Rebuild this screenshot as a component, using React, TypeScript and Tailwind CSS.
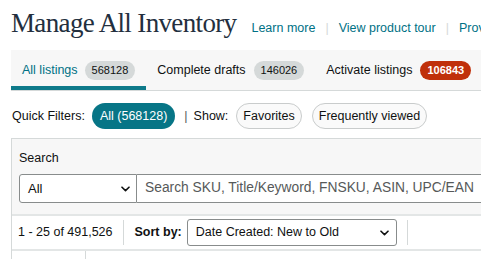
import React from "react";

function Chevron() {
  return (
    <svg width="9" height="6" viewBox="0 0 9 6" className="shrink-0">
      <path d="M1 1.2 L4.5 4.6 L8 1.2" fill="none" stroke="#0f1111" strokeWidth="1.6" strokeLinecap="round" strokeLinejoin="round" />
    </svg>
  );
}

export default function App() {
  return (
    <div className="w-[481px] h-[259px] overflow-hidden bg-white text-[#0f1111] font-['Liberation_Sans',Arial,sans-serif] text-[12.5px]">
      <div className="w-[680px]">
        {/* Header */}
        <div className="flex items-baseline pl-[11px] pt-[9px] h-[50px]">
          <h1 className="font-['Liberation_Serif','Times_New_Roman',serif] text-[27px] leading-[28px] text-[#232f3e] tracking-[-0.65px]">
            Manage All Inventory
          </h1>
          <a className="ml-[15px] text-[#007185]">Learn more</a>
          <span className="mx-[10px] text-[#d5d9d9]">|</span>
          <a className="text-[#007185]">View product tour</a>
          <span className="mx-[10px] text-[#d5d9d9]">|</span>
          <a className="text-[#007185]">Provide feedback</a>
        </div>

        {/* Tabs */}
        <div className="ml-[11px] h-[41px] flex bg-[#f7f7f7] border-b border-[#d5d9d9]">
          <div className="flex items-center gap-[7px] px-[11px] pt-[4px] border-b-4 border-[#0e7a8a]">
            <span className="text-[#007185]">All listings</span>
            <span className="h-[19px] px-[7px] rounded-full bg-[#d5d9d9] text-[11px] leading-[19px] text-[#0f1111]">568128</span>
          </div>
          <div className="flex items-center gap-[8px] px-[11px] pt-[4px] border-b-4 border-transparent">
            <span>Complete drafts</span>
            <span className="h-[19px] px-[7px] rounded-full bg-[#d5d9d9] text-[11px] leading-[19px] text-[#0f1111]">146026</span>
          </div>
          <div className="flex items-center gap-[8px] px-[11px] pt-[4px] border-b-4 border-transparent">
            <span>Activate listings</span>
            <span className="h-[19px] px-[7px] rounded-full bg-[#c0300a] text-[11px] leading-[19px] font-bold text-white">106843</span>
          </div>
        </div>

        {/* Quick filters */}
        <div className="flex items-center h-[26px] mt-[12px] pl-[12px]">
          <span>Quick Filters:</span>
          <button className="ml-[7px] h-[26px] px-[8px] rounded-full bg-[#077586] text-white font-medium">All (568128)</button>
          <span className="ml-[9px] text-[#565959]">|</span>
          <span className="ml-[6px]">Show:</span>
          <button className="ml-[8px] h-[26px] px-[6px] rounded-full border border-[#c9cccc] bg-[#fafafa]">Favorites</button>
          <button className="ml-[10px] h-[26px] px-[6px] rounded-full border border-[#c9cccc] bg-[#fafafa]">Frequently viewed</button>
        </div>

        {/* Search panel + results */}
        <div className="ml-[11px] mt-[9px] border-l border-t border-[#d5d9d9]">
          <div className="bg-[#f7f7f7] pl-[7px] pt-[11px] pb-[11px] border-b-2 border-[#e3e6e6]">
            <div className="leading-[16px]">Search</div>
            <div className="flex mt-[8px] h-[29px]">
              <div className="w-[118px] flex items-center justify-between pl-[8px] pr-[6px] bg-white border border-[#888c8c] rounded-l-[3px]">
                <span className="text-[13px]">All</span>
                <Chevron />
              </div>
              <div className="flex-1 flex items-center pl-[8px] bg-white border border-l-0 border-[#888c8c]">
                <span className="text-[#565959] text-[13.8px]">Search SKU, Title/Keyword, FNSKU, ASIN, UPC/EAN</span>
              </div>
            </div>
          </div>
          <div className="flex items-center h-[35px] pl-[6px] border-b-2 border-[#e3e6e6]">
            <span>1 - 25 of 491,526</span>
            <div className="ml-[10px] w-px h-[25px] bg-[#d5d9d9]" />
            <span className="ml-[11px] font-bold">Sort by:</span>
            <div className="ml-[5px] w-[210px] h-[27px] flex items-center justify-between pl-[8px] pr-[7px] border border-[#888c8c] rounded-[3px] bg-white">
              <span>Date Created: New to Old</span>
              <Chevron />
            </div>
            <div className="ml-[10px] w-px h-[25px] bg-[#d5d9d9]" />
          </div>
          <div className="flex h-[10px]">
            <div className="w-[74px] border-r border-[#d5d9d9]" />
          </div>
        </div>
      </div>
    </div>
  );
}
